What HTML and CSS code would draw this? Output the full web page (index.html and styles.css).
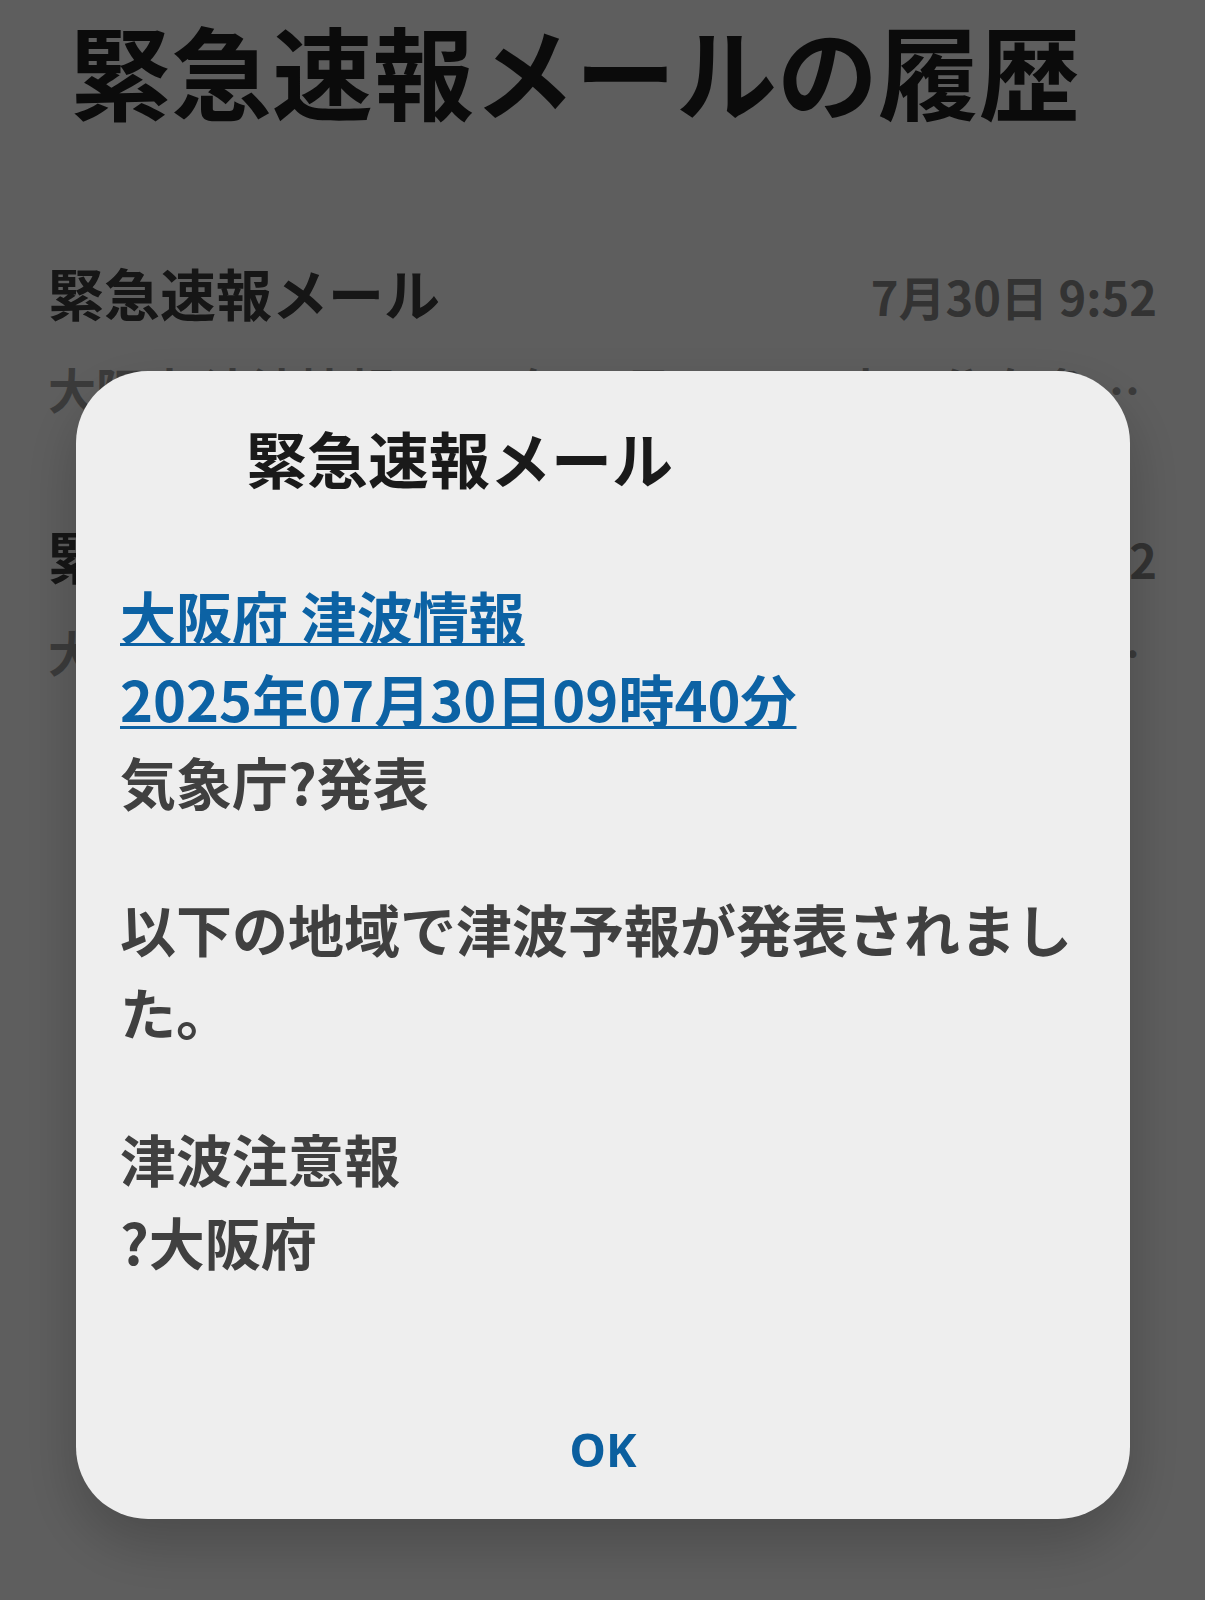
FILE: index.html
```html
<!DOCTYPE html>
<html lang="ja">
<head>
<meta charset="utf-8">
<title>緊急速報メールの履歴</title>
<link rel="stylesheet" href="styles.css">
</head>
<body>
<main class="page">
  <h1 class="page-title">緊急速報メールの履歴</h1>
  <ul class="msg-list">
    <li class="msg">
      <div class="msg-head">
        <span class="msg-title">緊急速報メール</span>
        <span class="msg-date">7月30日 9:52</span>
      </div>
      <p class="msg-preview">大阪府 津波情報 2025年07月30日09時40分 気象庁?発表 以下の地域で津波予報が発表されました。</p>
    </li>
    <li class="msg">
      <div class="msg-head">
        <span class="msg-title">緊急速報メール</span>
        <span class="msg-date">7月30日 9:52</span>
      </div>
      <p class="msg-preview">大阪府 津波情報 2025年07月30日09時40分 気象庁?発表 以下の地域で津波予報が発表されました。</p>
    </li>
  </ul>
</main>

<div class="scrim">
  <section class="dialog" role="dialog" aria-labelledby="dlg-title">
    <h2 class="dialog-title" id="dlg-title">緊急速報メール</h2>
    <div class="dialog-body">
      <p><a class="dialog-link" href="#">大阪府 津波情報<br>2025年07月30日09時40分</a><br>気象庁?発表</p>
      <p>以下の地域で津波予報が発表されました。</p>
      <p>津波注意報<br>?大阪府</p>
    </div>
    <div class="dialog-actions">
      <button class="dialog-btn" type="button">OK</button>
    </div>
  </section>
</div>
</body>
</html>
```

FILE: styles.css
```css
* {
  box-sizing: border-box;
}

html, body {
  margin: 0;
  padding: 0;
}

body {
  background: #ffffff;
  font-family: "Noto Sans CJK JP", "Noto Sans", sans-serif;
  width: 1205px;
  height: 1600px;
  overflow: hidden;
}

.page {
  padding: 9px 48px 0 48px;
}

.page-title {
  margin: 0 0 129px 22px;
  font-size: 101px;
  line-height: 120px;
  font-weight: 700;
  color: #1e1e1e;
}

.msg-list {
  list-style: none;
  margin: 0;
  padding: 0;
  display: flex;
  flex-direction: column;
  gap: 104px;
}

.msg-head {
  display: flex;
  justify-content: space-between;
  align-items: baseline;
}

.msg-title {
  font-size: 56px;
  line-height: 67px;
  font-weight: 700;
  color: #3c3c3c;
}

.msg-date {
  font-size: 47px;
  line-height: 67px;
  font-weight: 700;
  color: #8a8a8a;
}

.msg-preview {
  margin: 30px 0 0 0;
  font-size: 48px;
  line-height: 58px;
  font-weight: 700;
  color: #a0a0a0;
  white-space: nowrap;
  overflow: hidden;
  text-overflow: ellipsis;
}

.scrim {
  position: fixed;
  inset: 0;
  background: rgba(0, 0, 0, 0.63);
  display: flex;
  flex-direction: column;
  padding: 371px 75px 0 76px;
}

.dialog {
  background: #eeeeee;
  border-radius: 72px;
  box-shadow: 0 24px 60px rgba(0, 0, 0, 0.22);
  padding: 47px 44px 40px 44px;
}

.dialog-title {
  margin: 0 0 0 126px;
  font-size: 61px;
  line-height: 80px;
  font-weight: 700;
  color: #1a1a1a;
}

.dialog-body {
  margin-top: 75px;
  font-size: 56px;
  line-height: 83px;
  font-weight: 700;
  color: #404040;
}

.dialog-body p {
  margin: 0 0 64px 0;
}

.dialog-body p:last-child {
  margin-bottom: 0;
}

.dialog-link {
  color: #0c62a4;
  text-decoration: underline;
  text-decoration-thickness: 3px;
  text-underline-offset: 4px;
}

.dialog-actions {
  margin-top: 137px;
  display: flex;
  justify-content: center;
}

.dialog-btn {
  background: none;
  border: 0;
  padding: 0 10px;
  font-family: "Noto Sans", Roboto, sans-serif;
  font-size: 46px;
  line-height: 60px;
  font-weight: 700;
  color: #0b5f9f;
}
```
